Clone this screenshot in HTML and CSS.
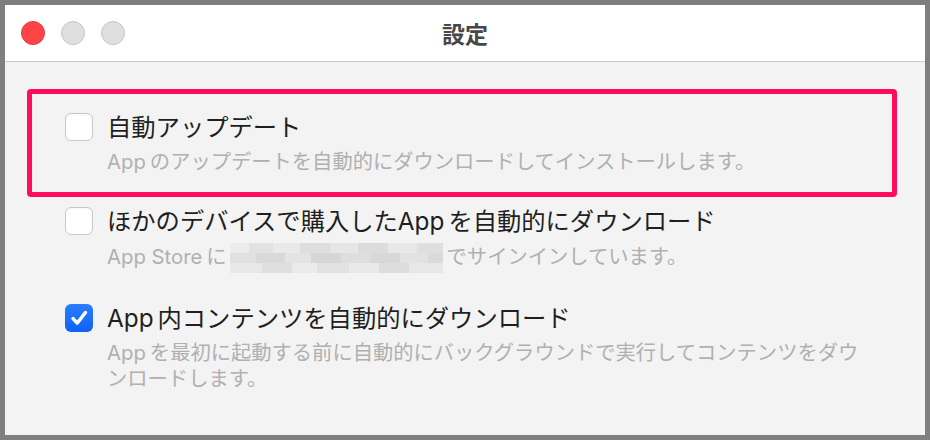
FILE: index.html
```html
<!DOCTYPE html>
<html>
<head>
  <meta charset="utf-8">
  <title>設定</title>
  <link rel="stylesheet" href="styles.css">
</head>
<body>
  <div class="window">
    <div class="titlebar">
      <div class="lights">
        <span class="light close"></span>
        <span class="light"></span>
        <span class="light"></span>
      </div>
      <div class="title">設定</div>
      <div></div>
    </div>

    <div class="options">
      <div class="option highlight">
        <span class="checkbox"></span>
        <div class="text">
          <div class="label">自動アップデート</div>
          <div class="desc"><span class="en">App</span>のアップデートを自動的にダウンロードしてインストールします。</div>
        </div>
      </div>

      <div class="option">
        <span class="checkbox"></span>
        <div class="text">
          <div class="label">ほかのデバイスで購入した<span class="en">App</span>を自動的にダウンロード</div>
          <div class="desc"><span class="en">App Store</span>に<span class="mosaic"></span>でサインインしています。</div>
        </div>
      </div>

      <div class="option">
        <span class="checkbox checked">
          <svg width="28" height="28" viewBox="0 0 28 28"><path d="M8 14.5l4.2 4.6L20.5 8.5" fill="none" stroke="#fff" stroke-width="3.4" stroke-linecap="round" stroke-linejoin="round"/></svg>
        </span>
        <div class="text">
          <div class="label"><span class="en">App</span>内コンテンツを自動的にダウンロード</div>
          <div class="desc"><span class="en">App</span>を最初に起動する前に自動的にバックグラウンドで実行してコンテンツをダウ<br>ンロードします。</div>
        </div>
      </div>
    </div>
  </div>
</body>
</html>
```

FILE: styles.css
```css
html, body {
  margin: 0;
  padding: 0;
}

body {
  background-color: #7f7f7f;
  padding: 5px;
  font-family: Inter, "Noto Sans CJK JP", sans-serif;
}

.window {
  height: 430px;
  background-color: #f3f3f3;
  display: flex;
  flex-direction: column;
}

.titlebar {
  height: 56px;
  background-color: #fff;
  border-bottom: 1px solid #cbcbcb;
  display: grid;
  grid-template-columns: 1fr auto 1fr;
  align-items: center;
}

.lights {
  display: flex;
  gap: 16px;
  padding-left: 16px;
}

.light {
  width: 22px;
  height: 22px;
  border-radius: 50%;
  background-color: #dfdfdf;
  border: 1px solid #c6c6c6;
}

.light.close {
  background-color: #fe4346;
  border-color: #e2393c;
}

.title {
  font-family: "Noto Sans CJK JP", sans-serif;
  font-size: 23px;
  font-weight: bold;
  color: #474747;
}

.options {
  padding: 27px 28px 0 22px;
}

.option {
  display: flex;
  gap: 14px;
  padding: 10px 20px 21px 38px;
}

.option.highlight {
  border: 5px solid #ff0c5c;
  border-radius: 4px;
  padding: 19px 15px 17px 33px;
}

.checkbox {
  flex: none;
  width: 26px;
  height: 26px;
  box-sizing: content-box;
  background-color: #fff;
  border: 1px solid #c8c8c8;
  border-radius: 6px;
  box-shadow: inset 0 1px 2px rgba(0, 0, 0, 0.04);
}

.checkbox.checked {
  width: 28px;
  height: 28px;
  border: none;
  background: linear-gradient(#2a7dff, #0e63f2);
  box-shadow: none;
}

.checkbox svg {
  display: block;
}

.label {
  font-size: 24.3px;
  line-height: 28px;
  color: #1f1f1f;
}

.desc {
  margin-top: 8px;
  font-size: 20.3px;
  line-height: 26px;
  color: #b0b0b0;
}

.en {
  margin-right: 4px;
}

.mosaic {
  display: inline-block;
  width: 213px;
  height: 30px;
  margin: 0 4px 0 3px;
  vertical-align: -9px;
  background:
    linear-gradient(90deg, #ececec 0 9%, #e2e2e2 9% 20%, #e9e9e9 20% 33%, #dedede 33% 47%, #e6e6e6 47% 60%, #dcdcdc 60% 74%, #e8e8e8 74% 88%, #dfdfdf 88% 100%) top / 100% 10px no-repeat,
    linear-gradient(90deg, #e0e0e0 0 12%, #d9d9d9 12% 26%, #e3e3e3 26% 38%, #d6d6d6 38% 52%, #dedede 52% 66%, #d8d8d8 66% 80%, #e2e2e2 80% 93%, #dadada 93% 100%) center / 100% 10px no-repeat,
    linear-gradient(90deg, #e8e8e8 0 15%, #dfdfdf 15% 29%, #eaeaea 29% 41%, #e1e1e1 41% 56%, #e9e9e9 56% 70%, #dddddd 70% 84%, #e7e7e7 84% 100%) bottom / 100% 10px no-repeat;
}
```
